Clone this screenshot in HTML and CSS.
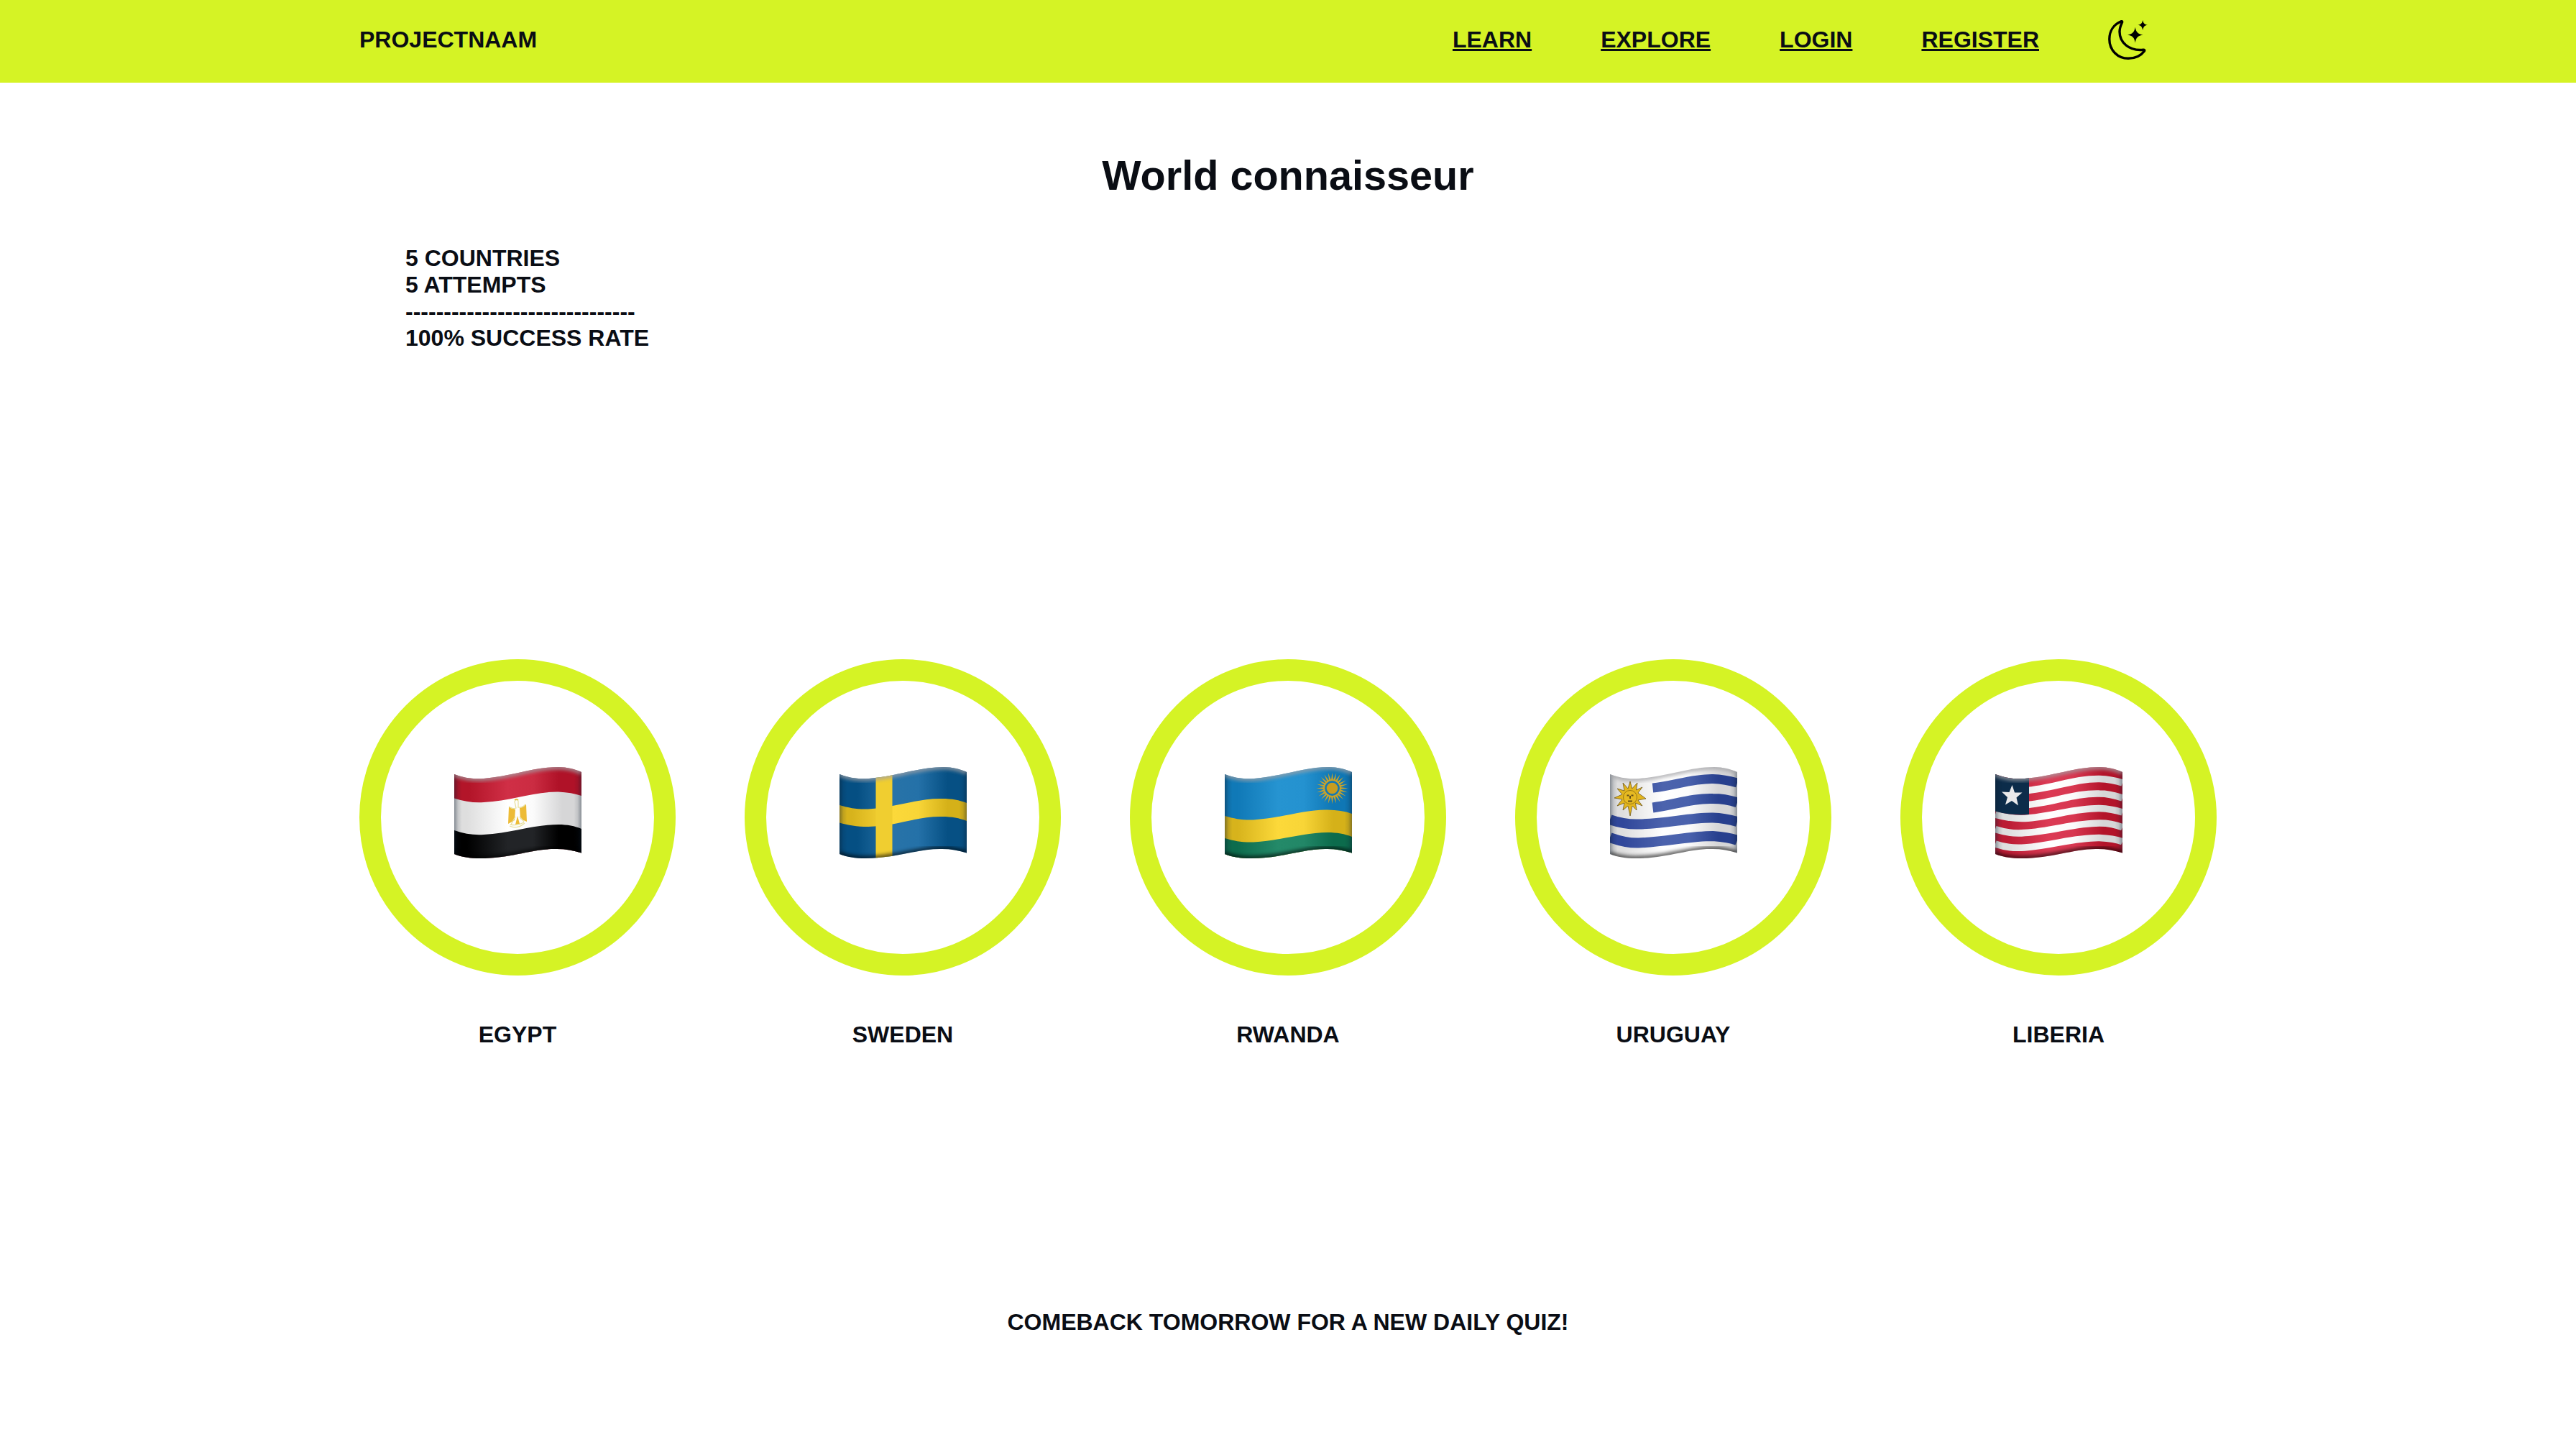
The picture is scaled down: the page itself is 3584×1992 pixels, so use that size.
FILE: index.html
```html
<!DOCTYPE html>
<html lang="en">
<head>
<meta charset="utf-8">
<title>World connaisseur</title>
<link rel="stylesheet" href="styles.css">
</head>
<body>
<svg class="defs" width="0" height="0" aria-hidden="true">
  <defs>
    <clipPath id="cloth"><path d="M0 10C14 15 24 17 41 16C80 13 110 0 145 0C157 0 168 3 177 7V119.500C166 116 155 114 143 114C110 113 80 127 36 127C22 127 10 125 0 121Z"/></clipPath>
    <linearGradient id="egypt-red" gradientUnits="userSpaceOnUse" x1="0" x2="177" y1="0" y2="0">
      <stop offset=".12" stop-color="#b31529"/><stop offset=".42" stop-color="#d02f46"/><stop offset=".62" stop-color="#cb2c42"/><stop offset=".82" stop-color="#b01228"/>
    </linearGradient>
    <linearGradient id="white" gradientUnits="userSpaceOnUse" x1="0" x2="177" y1="0" y2="0">
      <stop offset=".1" stop-color="#dedede"/><stop offset=".42" stop-color="#fff"/><stop offset=".62" stop-color="#fbfbfb"/><stop offset=".85" stop-color="#d6d6d7"/>
    </linearGradient>
    <linearGradient id="black" gradientUnits="userSpaceOnUse" x1="0" x2="177" y1="0" y2="0">
      <stop offset=".1" stop-color="#000"/><stop offset=".42" stop-color="#222427"/><stop offset=".62" stop-color="#222427"/><stop offset=".82" stop-color="#000"/>
    </linearGradient>
    <linearGradient id="sweden-blue" gradientUnits="userSpaceOnUse" x1="0" x2="177" y1="0" y2="0">
      <stop offset=".14" stop-color="#054f83"/><stop offset=".42" stop-color="#2873a8"/><stop offset=".62" stop-color="#2471a8"/><stop offset=".85" stop-color="#065084"/>
    </linearGradient>
    <linearGradient id="yellow" gradientUnits="userSpaceOnUse" x1="0" x2="177" y1="0" y2="0">
      <stop offset=".1" stop-color="#d7b31c"/><stop offset=".42" stop-color="#fcd93a"/><stop offset=".62" stop-color="#f8d537"/><stop offset=".85" stop-color="#d5b119"/>
    </linearGradient>
    <linearGradient id="rwanda-blue" gradientUnits="userSpaceOnUse" x1="0" x2="177" y1="0" y2="0">
      <stop offset=".1" stop-color="#1079b7"/><stop offset=".42" stop-color="#2694d1"/><stop offset=".62" stop-color="#2492d0"/><stop offset=".85" stop-color="#0f77b5"/>
    </linearGradient>
    <linearGradient id="green" gradientUnits="userSpaceOnUse" x1="0" x2="177" y1="0" y2="0">
      <stop offset=".1" stop-color="#0d6c4d"/><stop offset=".42" stop-color="#248a69"/><stop offset=".62" stop-color="#228767"/><stop offset=".85" stop-color="#0c6b4c"/>
    </linearGradient>
    <linearGradient id="uruguay-blue" gradientUnits="userSpaceOnUse" x1="0" x2="177" y1="0" y2="0">
      <stop offset=".1" stop-color="#30479a"/><stop offset=".42" stop-color="#4c63ad"/><stop offset=".62" stop-color="#4961ac"/><stop offset=".85" stop-color="#28408e"/>
    </linearGradient>
    <linearGradient id="liberia-red" gradientUnits="userSpaceOnUse" x1="0" x2="177" y1="0" y2="0">
      <stop offset=".1" stop-color="#bb1c34"/><stop offset=".42" stop-color="#dc3b55"/><stop offset=".62" stop-color="#d73750"/><stop offset=".85" stop-color="#b3142a"/>
    </linearGradient>
    <linearGradient id="edges" x1="0" x2="1" y1="0" y2="0">
      <stop offset="0" stop-color="#0a1a2c" stop-opacity=".42"/>
      <stop offset=".03" stop-color="#0a1a2c" stop-opacity=".12"/>
      <stop offset=".06" stop-color="#0a1a2c" stop-opacity="0"/>
      <stop offset=".94" stop-color="#0a1a2c" stop-opacity="0"/>
      <stop offset=".97" stop-color="#0a1a2c" stop-opacity=".1"/>
      <stop offset="1" stop-color="#0a1a2c" stop-opacity=".38"/>
    </linearGradient>
    <filter id="soft" x="-10%" y="-30%" width="120%" height="160%"><feGaussianBlur stdDeviation="2.500"/></filter>
    <g id="shade">
      <rect width="177" height="128" fill="url(#edges)"/>
      <path class="rim-light" filter="url(#soft)" d="M0 10C14 15 24 17 41 16C80 13 110 0 145 0C157 0 168 3 177 7"/>
      <path class="rim-dark" filter="url(#soft)" d="M0 121C10 125 22 127 36 127C80 127 110 113 143 114C155 114 166 116 177 119.500"/>
    </g>
    <path id="ray" d="M-1.500 -11L0 -22L1.500 -11Z"/>
    <g id="ray-quarter">
      <use href="#ray"/>
      <use href="#ray" transform="rotate(15)"/>
      <use href="#ray" transform="rotate(30)"/>
      <use href="#ray" transform="rotate(45)"/>
      <use href="#ray" transform="rotate(60)"/>
      <use href="#ray" transform="rotate(75)"/>
    </g>
  </defs>
</svg>

<header class="header">
  <div class="bar">
    <span class="brand">PROJECTNAAM</span>
    <nav class="nav">
      <a href="#">LEARN</a>
      <a href="#">EXPLORE</a>
      <a href="#">LOGIN</a>
      <a href="#">REGISTER</a>
      <svg class="moon" viewBox="0 0 55 56" aria-label="Dark mode">
        <path class="moon-line" d="M18.500 1.700C7.500 6 1.800 15.500 1.800 26.500C1.800 42 13.500 53.300 28 53.300C37.500 53.300 45.500 49.500 50.300 43.200C51.200 41.800 50.400 41.200 49 41.300C29 43.300 16 31 16 16C16 11.500 17.500 7.500 19.300 3.600C20 2.100 19.500 1.400 18.500 1.700Z"/>
        <path d="M37.700 9.800C39 17 41.500 19.200 48.500 20.500C41.500 21.800 39 24 37.700 31.500C36.400 24 34 21.800 27 20.500C34 19.200 36.400 17 37.700 9.800Z"/>
        <path d="M48.200 0C49.200 4.600 50.600 6 55 6.800C50.600 7.600 49.200 9.200 48.200 14C47.200 9.200 45.800 7.600 41.400 6.800C45.800 6 47.200 4.600 48.200 0Z"/>
      </svg>
    </nav>
  </div>
</header>

<main class="main">
  <h1>World connaisseur</h1>
  <p class="stats">5 COUNTRIES<br>5 ATTEMPTS<br>------------------------------<br>100% SUCCESS RATE</p>

  <ul class="flags">
    <li>
      <div class="ring">
        <svg class="flag" viewBox="0 0 177 128">
          <g clip-path="url(#cloth)">
            <rect width="177" height="128" fill="url(#egypt-red)"/>
            <path fill="url(#white)" d="M0 43.500C14 48 28 50 41 49C80 47 110 34 145 34.500C157 35 168 37 177 40V140H0Z"/>
            <path fill="url(#black)" d="M0 88C14 93 28 95 41 94C80 92 110 80 145 80C157 80 168 82 177 86V140H0Z"/>
            <use href="#shade"/>
            <path fill="#edbb36" d="M76 55L85 59L84 74L75 79ZM100 52L91 57L92 72L101 76ZM88 68L91 79L85 80Z"/>
            <path fill="none" stroke="#e8e0a0" stroke-width="1.300" d="M76 55Q81 59 86 57L84 48Q86 44 89 47L89 56Q95 57 99 52M79 80L85 69M91 69L97 76M77 82Q88 87 98 78M78 80Q88 82 97 77"/>
            <path fill="none" stroke="#e3b82f" stroke-width="1.500" d="M84 46Q87 43.500 89 46"/>
          </g>
        </svg>
      </div>
      <span>EGYPT</span>
    </li>
    <li>
      <div class="ring">
        <svg class="flag" viewBox="0 0 177 128">
          <g clip-path="url(#cloth)">
            <rect width="177" height="128" fill="url(#sweden-blue)"/>
            <path fill="url(#yellow)" d="M0 53C14 57 24 59 40 58.500C80 56 110 43 143 44C156 44 167 46 177 50V75C167 71 156 69 143 69C110 68 80 82 40 83C24 83 12 81 0 77.500Z"/>
            <rect x="50.500" width="23" height="128" fill="#f0ce30"/>
            <use href="#shade"/>
          </g>
        </svg>
      </div>
      <span>SWEDEN</span>
    </li>
    <li>
      <div class="ring">
        <svg class="flag" viewBox="0 0 177 128">
          <g clip-path="url(#cloth)">
            <rect width="177" height="128" fill="url(#rwanda-blue)"/>
            <path fill="url(#yellow)" d="M0 59C14 63 24 65 40 64.500C80 62 110 50 143 50.500C156 51 167 52 177 56V140H0Z" transform="translate(0 9)"/>
            <path fill="url(#green)" d="M0 99C14 103 24 105 40 104.500C80 102 110 91 143 91C156 91 167 93 177 97V140H0Z"/>
            <use href="#shade"/>
            <g fill="#c8a32b" transform="translate(149.500 29.500)">
              <use href="#ray-quarter"/>
              <use href="#ray-quarter" transform="rotate(90)"/>
              <use href="#ray-quarter" transform="rotate(180)"/>
              <use href="#ray-quarter" transform="rotate(270)"/>
              <circle r="12.200"/>
              <circle r="10.400" fill="#1278b5"/>
              <circle r="7.800" fill="#c79d20"/>
            </g>
          </g>
        </svg>
      </div>
      <span>RWANDA</span>
    </li>
    <li>
      <div class="ring">
        <svg class="flag" viewBox="0 0 177 128">
          <g clip-path="url(#cloth)">
            <rect width="177" height="128" fill="url(#white)"/>
            <g fill="none" stroke="url(#uruguay-blue)">
              <path stroke-width="13" d="M59.500 29C88 26 115 16 143 16.500C156 17 167 19 177 22"/>
              <path stroke-width="14" d="M59.500 56.500C88 53 115 43 143 44C156 44 167 46 177 49.500"/>
              <path stroke-width="14" d="M0 73C14 78 26 80 40 79.500C80 79 110 70 143 70.500C156 71 167 73 177 76"/>
              <path stroke-width="14" d="M0 98C14 103 26 106 40 105.500C80 104 110 96 143 96C156 97 167 98 177 102"/>
            </g>
            <use href="#shade"/>
            <path fill="#e2b51e" stroke="#70591c" stroke-width=".8" d="M28 20L30.700 30L38 22L36.500 32L45 28L39 36L50 44L39 46L45 54L35.500 50L37 60L31 54L28 68L25 54L18 60L20 50L10 54L17 45L6 43L17 38L10 30L20 33L18 22L25 30Z"/>
            <circle cx="28" cy="42" r="9.500" fill="#e6ba22" stroke="#9b7914" stroke-width="1"/>
            <path stroke="#654e18" stroke-width="2" fill="none" d="M23.500 39.500H26.500M29.500 39.500H32.500M28 40V44M25 47.500H31"/>
          </g>
        </svg>
      </div>
      <span>URUGUAY</span>
    </li>
    <li>
      <div class="ring">
        <svg class="flag" viewBox="0 0 177 128">
          <g clip-path="url(#cloth)">
            <rect width="177" height="128" fill="url(#liberia-red)"/>
            <g fill="none" stroke="url(#white)" stroke-width="9.500">
              <path d="M0 30C14 34 28 35 41 33C80 30 110 16 145 16.500C157 17 168 19 177 22"/>
              <path d="M0 50C14 54 28 55 41 53C80 50 110 36 145 37C157 37 168 40 177 43"/>
              <path d="M0 66C14 70 28 72 41 71.500C80 69 110 57 145 57.500C157 58 168 60 177 63"/>
              <path d="M0 86.500C14 91 28 93 41 91.500C80 89 110 78 145 78C157 78 168 80 177 84"/>
              <path d="M0 107C14 112 28 113 41 112C80 109 110 98 145 98.500C157 99 168 100 177 104"/>
            </g>
            <path fill="#0c2c4a" d="M0 0H47V66Q22 68 0 61.500Z"/>
            <use href="#shade"/>
            <path fill="#e9e9ea" d="M23.500 25L27 35.500H37.500L29.500 42.500L32 53.500L23 47L14 52.500L17 42L9 34.500L19.500 35Z"/>
          </g>
        </svg>
      </div>
      <span>LIBERIA</span>
    </li>
  </ul>

  <p class="message">COMEBACK TOMORROW FOR A NEW DAILY QUIZ!</p>
</main>
</body>
</html>
```

FILE: styles.css
```css
* {
  box-sizing: border-box;
  margin: 0;
  padding: 0;
}

body {
  background: #fff;
  color: #0a0d14;
  font: bold 32px/37px "Liberation Sans", Arial, sans-serif;
}

.defs {
  display: block;
}

.header {
  height: 115px;
  background: #d5f325;
}

.bar,
.main {
  width: 2584px;
  margin: 0 auto;
}

.bar {
  display: flex;
  justify-content: space-between;
  padding-top: 28px;
}

.brand,
.nav a {
  padding-top: 9px;
}

.nav {
  display: flex;
  gap: 96px;
  padding-right: 96px;
}

.nav a {
  color: inherit;
  text-decoration-thickness: 3px;
  text-underline-offset: 2px;
}

.moon {
  width: 55px;
  height: 56px;
  fill: #000;
}

.moon-line {
  fill: none;
  stroke: #000;
  stroke-width: 3.4;
  stroke-linejoin: round;
}

.main {
  display: flex;
  flex-direction: column;
}

h1 {
  margin-top: 96px;
  text-align: center;
  font-size: 57.6px;
  line-height: 66px;
}

.stats {
  margin-top: 64px;
  padding-left: 64px;
}

.flags {
  display: flex;
  justify-content: space-between;
  margin-top: 428px;
  list-style: none;
}

.flags li {
  display: flex;
  flex-direction: column;
  align-items: center;
  gap: 64px;
}

.ring {
  display: flex;
  justify-content: center;
  width: 440px;
  height: 440px;
  padding-top: 120px;
  border: 30px solid #d5f325;
  border-radius: 50%;
}

.flag {
  width: 177px;
  height: 128px;
}

.rim-light,
.rim-dark {
  fill: none;
  stroke-width: 7;
}

.rim-light {
  stroke: #a0a0a4;
  opacity: .75;
}

.rim-dark {
  stroke: #000;
  opacity: .6;
}

.message {
  margin-top: 363px;
  text-align: center;
}
```
